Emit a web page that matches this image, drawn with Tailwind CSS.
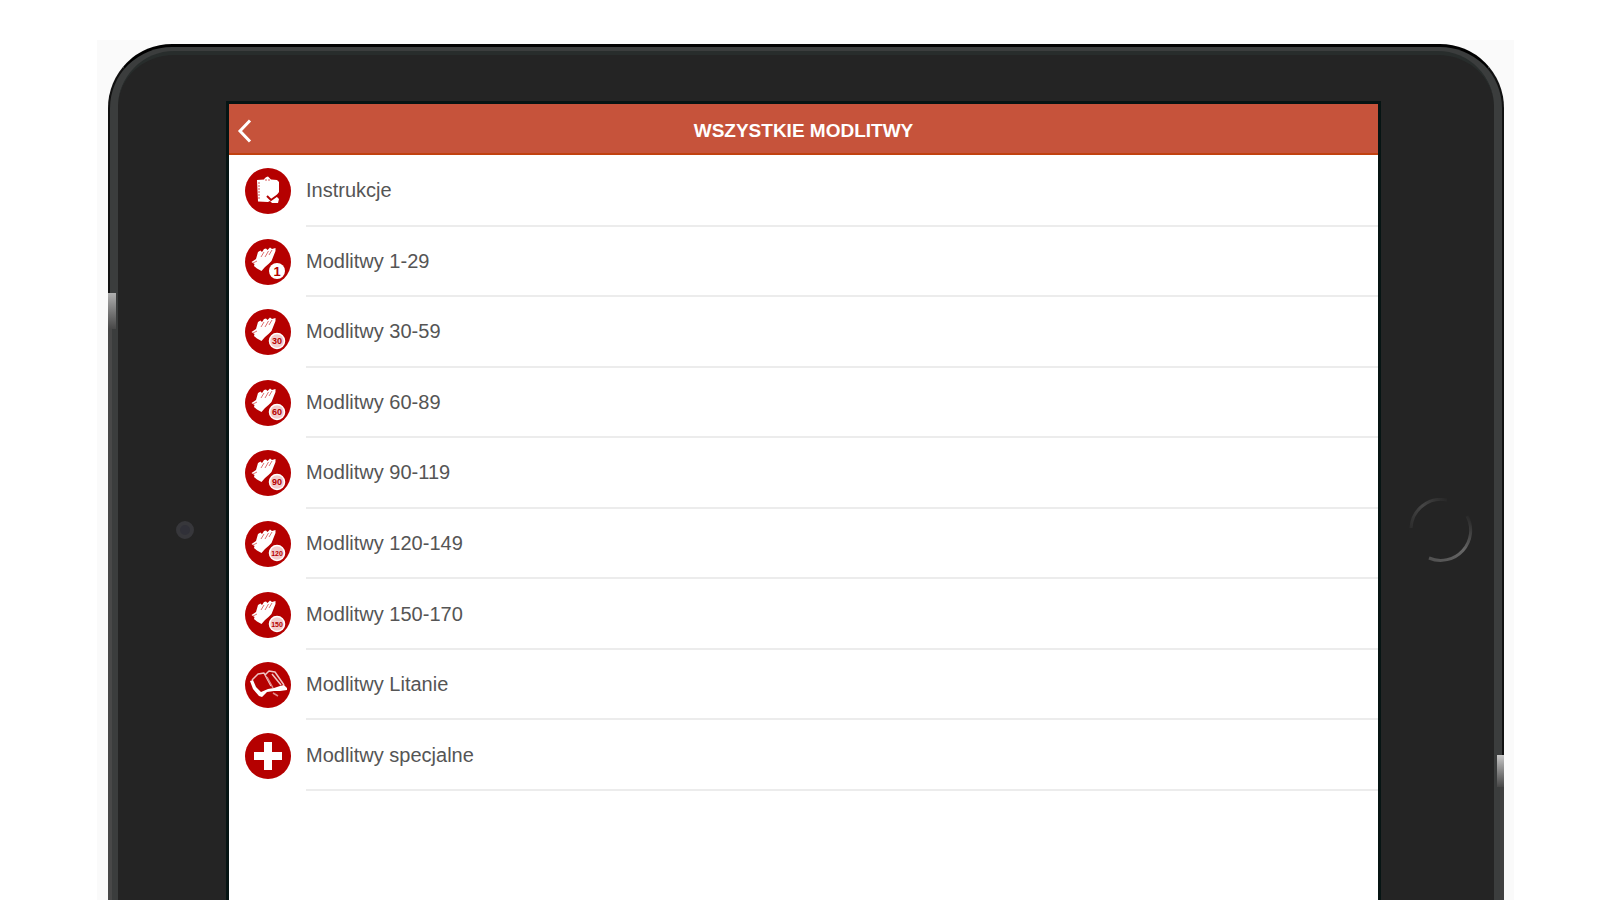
<!DOCTYPE html>
<html lang="pl">
<head>
    <meta charset="UTF-8">
    <meta name="viewport" content="width=device-width, initial-scale=1.0">
    <title>Wszystkie modlitwy</title>
    <script src="https://cdn.jsdelivr.net/npm/@tailwindcss/browser@4"></script>
</head>
<body class="bg-white h-screen overflow-hidden font-['Liberation_Sans',Arial,sans-serif]">

    <!-- Shared icon shapes -->
    <svg class="hidden" xmlns="http://www.w3.org/2000/svg">
        <symbol id="hands" viewBox="0 0 46 46">
            <circle cx="23" cy="23" r="23" fill="#b50000"/>
            <path fill="#fff" d="M6.500 23L11 20L13 13L15.500 11.500L17 13L19 10L21 9.500L22.500 11L25 8.500L27 10L30.500 9L30.500 12L28.500 17L26.500 22L23.500 25L20 28L16.500 32L12 29.500L9 27L9.500 25Z"/>
            <path fill="none" stroke="#dd7070" stroke-width="1" d="M16 18L19 13M20 18L23.500 12M24 16L27 11M8 24L12 22"/>
        </symbol>
        <symbol id="badge" viewBox="0 0 46 46">
            <circle cx="32" cy="32" r="7.500" fill="#f3cccc" stroke="#fff" stroke-width="1.500"/>
        </symbol>
    </svg>

    <div class="pt-10 pl-[97px] pr-[86px] h-full">
        <div class="bg-[#fafafa] pt-1 pl-[11px] pr-[10px] h-full">

            <!-- Tablet body -->
            <div class="relative h-full flex flex-col rounded-t-[64px] border-t-[3px] border-x-2 border-t-black border-x-[#111] bg-[#3b3d3d]">
                <div class="mt-1 mx-2 grow flex rounded-t-[56px] border-t-4 border-[#282d2c] bg-[#242424]">

                    <!-- Camera -->
                    <div class="w-[111px] shrink-0 pl-[58px] pt-[466px]">
                        <div class="size-[18px] rounded-full border-4 border-[#37373b] bg-[#303038]"></div>
                    </div>

                    <!-- Screen -->
                    <main class="mt-[49px] grow bg-white outline-3 outline-[#061413]">
                        <header class="h-[51px] pt-1 grid grid-cols-[48px_1fr_48px] items-center bg-[#c6533b] border-b-2 border-[#c1410f] text-white">
                            <button type="button" aria-label="Wstecz" class="pl-2">
                                <svg class="w-4 h-6" viewBox="0 0 16 24" fill="none" stroke="currentColor" stroke-width="3">
                                    <path d="M13 1.500L3 12L13 22.500"/>
                                </svg>
                            </button>
                            <h1 class="text-center text-[19px] leading-6 font-bold">WSZYSTKIE MODLITWY</h1>
                        </header>

                        <ul class="h-[636px] pt-px grid grid-rows-9 pl-4 text-xl text-[#555]">
                            <li class="flex">
                                <a href="#instrukcje" class="grow flex items-center gap-[15px]">
                                    <svg class="size-[46px] shrink-0" viewBox="0 0 46 46">
                                        <circle cx="23" cy="23" r="23" fill="#b50000"/>
                                        <path fill="#fff" d="M12 12L19 11.500L20 10L21.500 9L23 8.500L24.500 10L26 11.500L32 12L34 14V24L31 28L34 31L33 35H27L25 33L23 34L13 33.500Z"/>
                                        <path fill="none" stroke="#b50000" stroke-width="2" d="M22 28L26 32L33 27"/>
                                        <path fill="none" stroke="#d65a5a" stroke-width="1" stroke-dasharray="2 1" d="M14 14V32M20 12H25"/>
                                    </svg>
                                    <span class="grow self-stretch flex items-center border-b-2 border-[#ececec]">Instrukcje</span>
                                </a>
                            </li>
                            <li class="flex">
                                <a href="#m1" class="grow flex items-center gap-[15px]">
                                    <svg class="size-[46px] shrink-0" viewBox="0 0 46 46">
                                        <use href="#hands"/>
                                        <circle cx="32" cy="32" r="8" fill="#fff"/>
                                        <text x="32" y="37" text-anchor="middle" font-size="13" font-weight="700" fill="#b50000">1</text>
                                    </svg>
                                    <span class="grow self-stretch flex items-center border-b-2 border-[#ececec]">Modlitwy 1-29</span>
                                </a>
                            </li>
                            <li class="flex">
                                <a href="#m30" class="grow flex items-center gap-[15px]">
                                    <svg class="size-[46px] shrink-0" viewBox="0 0 46 46">
                                        <use href="#hands"/>
                                        <use href="#badge"/>
                                        <text x="32" y="35" text-anchor="middle" font-size="9" font-weight="700" fill="#b50000">30</text>
                                    </svg>
                                    <span class="grow self-stretch flex items-center border-b-2 border-[#ececec]">Modlitwy 30-59</span>
                                </a>
                            </li>
                            <li class="flex">
                                <a href="#m60" class="grow flex items-center gap-[15px]">
                                    <svg class="size-[46px] shrink-0" viewBox="0 0 46 46">
                                        <use href="#hands"/>
                                        <use href="#badge"/>
                                        <text x="32" y="35" text-anchor="middle" font-size="9" font-weight="700" fill="#b50000">60</text>
                                    </svg>
                                    <span class="grow self-stretch flex items-center border-b-2 border-[#ececec]">Modlitwy 60-89</span>
                                </a>
                            </li>
                            <li class="flex">
                                <a href="#m90" class="grow flex items-center gap-[15px]">
                                    <svg class="size-[46px] shrink-0" viewBox="0 0 46 46">
                                        <use href="#hands"/>
                                        <use href="#badge"/>
                                        <text x="32" y="35" text-anchor="middle" font-size="9" font-weight="700" fill="#b50000">90</text>
                                    </svg>
                                    <span class="grow self-stretch flex items-center border-b-2 border-[#ececec]">Modlitwy 90-119</span>
                                </a>
                            </li>
                            <li class="flex">
                                <a href="#m120" class="grow flex items-center gap-[15px]">
                                    <svg class="size-[46px] shrink-0" viewBox="0 0 46 46">
                                        <use href="#hands"/>
                                        <use href="#badge"/>
                                        <text x="32" y="35" text-anchor="middle" font-size="7" font-weight="700" fill="#b50000">120</text>
                                    </svg>
                                    <span class="grow self-stretch flex items-center border-b-2 border-[#ececec]">Modlitwy 120-149</span>
                                </a>
                            </li>
                            <li class="flex">
                                <a href="#m150" class="grow flex items-center gap-[15px]">
                                    <svg class="size-[46px] shrink-0" viewBox="0 0 46 46">
                                        <use href="#hands"/>
                                        <use href="#badge"/>
                                        <text x="32" y="35" text-anchor="middle" font-size="7" font-weight="700" fill="#b50000">150</text>
                                    </svg>
                                    <span class="grow self-stretch flex items-center border-b-2 border-[#ececec]">Modlitwy 150-170</span>
                                </a>
                            </li>
                            <li class="flex">
                                <a href="#litanie" class="grow flex items-center gap-[15px]">
                                    <svg class="size-[46px] shrink-0" viewBox="0 0 46 46">
                                        <circle cx="23" cy="23" r="23" fill="#b50000"/>
                                        <path fill="none" stroke="#f0c4c4" stroke-width="1.500" stroke-linejoin="round" d="M7 18L13 12L19 11L26 24M20 13L24 9L30 10L39 23M27 12L36 23"/>
                                        <path fill="#fff" d="M5 19L8 18L11 25L16 30L23 27L29 26L35 24L39 23L42 26V28L35 29L29 29L22 30L17 35L14 34L8 27Z"/>
                                        <path fill="none" stroke="#e08a8a" stroke-width="1.500" d="M22 15L28 26M28 31L33 34"/>
                                    </svg>
                                    <span class="grow self-stretch flex items-center border-b-2 border-[#ececec]">Modlitwy Litanie</span>
                                </a>
                            </li>
                            <li class="flex">
                                <a href="#specjalne" class="grow flex items-center gap-[15px]">
                                    <svg class="size-[46px] shrink-0" viewBox="0 0 46 46">
                                        <circle cx="23" cy="23" r="23" fill="#b50000"/>
                                        <path fill="#fff" d="M19 9H27V19H37V27H27V37H19V27H9V19H19Z"/>
                                    </svg>
                                    <span class="grow self-stretch flex items-center border-b-2 border-[#ececec]">Modlitwy specjalne</span>
                                </a>
                            </li>
                        </ul>
                    </main>

                    <!-- Home button -->
                    <div class="w-[116px] shrink-0 pl-[31px] pt-[443px]">
                        <button type="button" aria-label="Ekran główny" class="block">
                            <svg class="size-[64px]" viewBox="0 0 64 64" fill="none" stroke-width="3">
                                <defs>
                                    <linearGradient id="ring-dark" gradientUnits="userSpaceOnUse" x1="0" y1="32" x2="40" y2="0">
                                        <stop offset="0" stop-color="#2a2a2a"/>
                                        <stop offset=".5" stop-color="#464646"/>
                                        <stop offset="1" stop-color="#242424"/>
                                    </linearGradient>
                                    <linearGradient id="ring-light" gradientUnits="userSpaceOnUse" x1="20" y1="62" x2="60" y2="16">
                                        <stop offset="0" stop-color="#505050"/>
                                        <stop offset=".5" stop-color="#666"/>
                                        <stop offset="1" stop-color="#242424"/>
                                    </linearGradient>
                                </defs>
                                <path stroke="url(#ring-dark)" d="M2 30A30 30 0 0 1 38 2"/>
                                <path stroke="url(#ring-light)" d="M58 18A30 30 0 0 1 20 60"/>
                            </svg>
                        </button>
                    </div>
                </div>

                <!-- Side reflections -->
                <div class="absolute -left-[2px] top-[246px] w-2 h-9 bg-linear-to-b from-[#b0b0b0] to-[#484848]"></div>
                <div class="absolute -left-[2px] top-[282px] bottom-0 w-1 bg-[#484848]"></div>
                <div class="absolute -right-[2px] top-[708px] w-[7px] h-8 bg-linear-to-b from-[#c8c8c8] to-[#484848]"></div>
                <div class="absolute -right-[2px] top-[740px] bottom-0 w-1 bg-[#404040]"></div>
            </div>
        </div>
    </div>

</body>
</html>
